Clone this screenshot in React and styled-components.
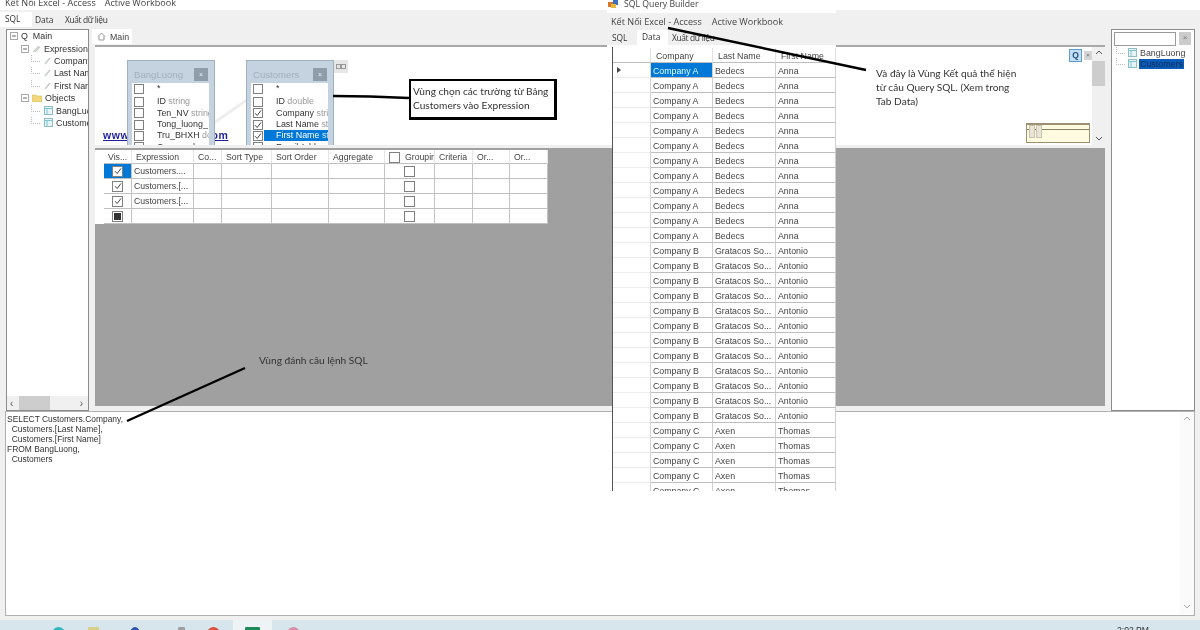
import React from "react";
import styled, { createGlobalStyle } from "styled-components";

const Global = createGlobalStyle`
  html, body { margin: 0; padding: 0; background: #fff; }
  * { box-sizing: border-box; }
`;
const ui = `"Liberation Sans", Arial, sans-serif`;
const menuFont = `"Open Sans", "Noto Sans", sans-serif`;
const noteFont = `Lato, "Open Sans", sans-serif`;

const Page = styled.div`
  position: relative; width: 1200px; height: 630px; overflow: hidden;
  display: flex; flex-direction: column; background: #f0f0f0;
  font-family: ${ui}; font-size: 8.8px; color: #333; filter: blur(.3px);
`;
const MenuBar = styled.div`
  height: 10px; flex: none; overflow: hidden; background: #fff; display: flex; gap: 9px;
  padding-left: 5px; font: 9.1px/10px ${menuFont}; color: #444;
`;
const MenuItem = styled.span`margin-top: -2px;`;
const TabBar = styled.div`
  height: 17px; flex: none; display: flex; align-items: flex-end; background: #f0f0f0;
  font: 8.4px/14px ${menuFont}; color: #333;
`;
const Tab = styled.div`
  height: ${p => (p.$on ? 15 : 14)}px; width: ${p => (p.$w ? `${p.$w}px` : "auto")}; padding-left: ${p => p.$pad || 5}px;
  letter-spacing: ${p => p.$tight ? "-.35px" : "0"}; background: ${p => (p.$on ? "#fff" : "transparent")};
`;
const Workspace = styled.div`
  height: 384px; flex: none; display: flex; padding: 2px 5px 0 6px; gap: 6px;
`;
const TreePanel = styled.div`
  width: 83px; flex: none; background: #fff; border: 1px solid #8c8c8c; display: flex; flex-direction: column; overflow: hidden;
`;
const TreeBody = styled.div`flex: 1; min-height: 0; overflow: hidden;`;
const TreeRow = styled.div`
  height: 12.4px; display: flex; align-items: center; white-space: nowrap; padding-left: ${p => p.$indent}px; gap: 3px; color: #333; font-size: 8.9px;
`;
const HScroll = styled.div`
  height: 14px; flex: none; display: flex; align-items: center; background: #f0f0f0; padding: 0 5px 0 3px; color: #555; font-size: 10px;
`;
const Thumb = styled.div`width: 31px; height: 14px; margin: 0 auto 0 6px; background: #cdcdcd;`;
const Center = styled.div`width: 1010px; flex: none; display: flex; flex-direction: column;`;
const CenterTabs = styled.div`height: 15px; flex: none; display: flex;`;
const MainTab = styled.div`
  width: 40px; margin-left: -3px; background: #fff; display: flex; align-items: center; gap: 4px; padding-left: 5px; color: #444; font-size: 8.8px;
`;
const EditorFrame = styled.div`
  flex: 1; background: #f0f0f0; padding-top: 2px; display: flex; flex-direction: column; min-height: 0; overflow: hidden; margin-bottom: 5px;
`;
const Diagram = styled.div`
  position: relative; height: 100px; flex: none; overflow: hidden; background: #fff; border-top: 2px solid #a8a8a8; margin-top: -1px;
`;
const Watermark = styled.svg`position: absolute; left: 110px; top: 20px;`;
const SiteLink = styled.a`
  position: absolute; left: 8px; top: 82px; color: #1f1f9e; font: bold 10.5px ${ui}; text-decoration: underline; letter-spacing: .6px;
`;
const Card = styled.div`
  position: absolute; left: ${p => p.$x}px; top: 13px; width: 88px; height: 110px; background: #c5d3e1; border: 1px solid #9fb0c2; padding: 0 5px 0 4px;
`;
const CardHead = styled.div`
  height: 22px; display: flex; align-items: flex-start; justify-content: space-between; padding: 7px 1px 0 2px; color: #a2afbb; font-size: 9.6px; line-height: 13px;
`;
const CloseBtn = styled.span`
  width: 14px; height: 13px; background: #8f9dab; color: #eef; display: flex; align-items: center; justify-content: center; font-size: 7px;
`;
const CardBody = styled.div`background: #fff; height: 90px; overflow: hidden;`;
const FieldRow = styled.div`
  height: 11.3px; display: flex; align-items: center; white-space: nowrap; overflow: hidden; padding-left: 2px; color: #333; font-size: 8.9px;
  &:first-child { margin-bottom: 2px; }
`;
const Box = styled.span`
  flex: none; width: ${p => p.$s || 10}px; height: ${p => p.$s || 10}px; border: 1px solid #808080; background: #fff; display: inline-flex; align-items: center; justify-content: center;
`;
const FieldName = styled.span`
  flex: 1; height: 11px; line-height: 11px; padding-left: 13px; margin-left: 1px; text-indent: -1px;
  background: ${p => (p.$on ? "#0078d7" : "transparent")}; color: ${p => (p.$on ? "#fff" : "#333")};
`;
const Muted = styled.span`color: ${p => (p.$on ? "#cfe4f7" : "#999")};`;
const MiniBtn = styled.span`
  position: absolute; left: 239px; top: 13px; width: 14px; height: 13px; background: #e6e6e6; display: flex; align-items: center; justify-content: center;
`;
const QBtn = styled.span`
  position: absolute; right: 23px; top: 2px; width: 13px; height: 13px; background: #c5dff2; border: 1px solid #5d9ccc; color: #1f4f7f; font: bold 8.5px/11px ${ui}; text-align: center;
`;
const SmallX = styled.span`
  position: absolute; right: 13px; top: 4px; width: 8px; height: 9px; background: #d4d4d4; color: #666; font-size: 6px; line-height: 8px; text-align: center;
`;
const VScroll = styled.div`
  position: absolute; right: 0; top: 0; bottom: 0; width: 13px; background: #f0f0f0; display: flex; flex-direction: column; align-items: center; justify-content: space-between; padding: 3px 0 4px;
`;
const VThumb = styled.div`position: absolute; top: 14px; left: 0; width: 13px; height: 25px; background: #cdcdcd;`;
const MiniMap = styled.div`
  position: absolute; left: 931px; top: 76px; width: 64px; height: 20px; background: #fffbe0; border: 1px solid #9c8f73; border-top-width: 2px;
`;
const MiniHead = styled.div`height: 5px; border-bottom: 1px solid #8a7f66; display: flex; gap: 1px; padding-left: 2px;`;
const MiniCell = styled.span`width: 6px; height: 13px; background: #e9e5d6; border: 1px solid #c9c2b0;`;
const GrayArea = styled.div`flex: 1; background: #a0a0a0; margin-top: 3px; padding-top: 2px; min-height: 0;`;
const QueryGrid = styled.div`
  width: 453px; background: #fff; display: grid;
  grid-template-columns: 9px 28px 62px 28px 50px 57px 56px 50px 38px 37px 38px;
  grid-template-rows: 14px repeat(4, 15px);
`;
const QCell = styled.div`
  display: flex; align-items: center; justify-content: ${p => (p.$mid ? "center" : "flex-start")}; gap: 5px;
  padding-left: ${p => (p.$mid ? 0 : p.$head ? 4 : 2)}px; padding-top: ${p => (p.$head ? 1 : 0)}px;
  border-right: ${p => (p.$plain ? 0 : `1px solid ${p.$head ? "#e6e6e6" : "#c4c4c4"}`)}; border-bottom: ${p => (p.$plain ? 0 : "1px solid #c0c0c0")};
  background: ${p => (p.$on ? "#0078d7" : "#fff")}; overflow: hidden; white-space: nowrap; color: #444; font-size: 8.7px;
`;
const ObjectPanel = styled.div`
  width: 84px; flex: none; background: #fff; border: 1px solid #8c8c8c; padding: 2px;
`;
const SearchRow = styled.div`display: flex; gap: 3px; height: 15px; margin-bottom: 0;`;
const SearchBox = styled.div`width: 62px; height: 14px; border: 1px solid #9a9a9a; background: #fff;`;
const SearchX = styled.div`width: 12px; height: 13px; background: #ccc; color: #777; text-align: center; font-size: 8px; line-height: 12px;`;
const ObjRow = styled.div`height: 11px; display: flex; align-items: center; gap: 2px; padding-left: 2px; color: #444; font-size: 8.9px;`;
const ObjName = styled.span`
  height: 10px; line-height: 10px; padding: 0 1px; background: ${p => (p.$on ? "#0a5cb8" : "transparent")}; color: ${p => (p.$on ? "#0b2a55" : "#444")};
`;
const SqlPane = styled.div`
  height: 205px; flex: none; margin: 0 5px; background: #fff; border: 1px solid #b0b0b0; display: flex; justify-content: space-between;
`;
const SqlText = styled.pre`margin: 0; padding: 2px 0 0 1px; font: 8.45px/10px ${ui}; color: #333;`;
const SqlScroll = styled.div`
  width: 14px; background: #fafafa; display: flex; flex-direction: column; justify-content: space-between; align-items: center; padding: 4px 0 6px;
`;
const Taskbar = styled.div`
  height: 10px; flex: none; margin-top: 4px; background: #d7e6ec; display: flex; align-items: flex-start; overflow: hidden;
`;
const Pin = styled.span`
  flex: none; margin-left: ${p => p.$ml}px; margin-top: 7px; width: ${p => p.$w || 13}px; height: 13px; border-radius: ${p => (p.$sq ? "1px" : "50%")}; background: ${p => p.$c};
`;
const ActiveTile = styled.div`
  flex: none; margin-left: ${p => p.$ml}px; width: 39px; height: 10px; background: #eef3f5; display: flex; justify-content: center;
`;
const Clock = styled.span`margin-left: auto; margin-right: 51px; margin-top: 5px; font-size: 8.6px; line-height: 10px; color: #333;`;

const ResultWindow = styled.div`
  position: absolute; left: 607px; top: 0; width: 229px; height: 491px; display: flex; flex-direction: column; overflow: hidden;
`;
const ResultTitle = styled.div`
  height: 13px; flex: none; background: #fff; display: flex; align-items: flex-start; gap: 5px; padding-left: 1px; font: 8.7px/9px ${menuFont}; color: #444; overflow: hidden;
`;
const ResultMenu = styled.div`
  height: 16px; flex: none; background: #f0f0f0; display: flex; gap: 10px; padding-left: 4px; font: 9.1px/17px ${menuFont}; color: #444;
`;
const ResultTabs = styled.div`
  height: 16px; flex: none; background: #f0f0f0; display: flex; align-items: flex-end; font: 8.4px/14px ${menuFont}; color: #333;
`;
const Rule = styled.div`height: 2px; flex: none; background: #fff;`;
const DataGrid = styled.div`
  flex: 1; margin-left: 5px; background: #fff; border-left: 1px solid #555; display: grid; grid-template-columns: 38px 62px 63px 60px; grid-auto-rows: 15px; overflow: hidden; align-content: start;
  padding-top: 1px;
`;
const Head = styled.div`height: 15px; line-height: 16px; padding-left: ${p => p.$pad ?? 5}px; border-right: 1px solid #e2e2e2; border-bottom: 1px solid #bdbdbd; color: #444; background: #fff;`;
const RowHead = styled.div`height: 15px; border-bottom: 1px solid #ececec; border-right: 1px solid #d4d4d4; display: flex; align-items: center; padding-left: 4px;`;
const DCell = styled.div`
  height: 15px; line-height: 17px; padding-left: 2px; border-right: 1px solid #cfcfcf; border-bottom: 1px solid #bdbdbd; white-space: nowrap; overflow: hidden;
  background: ${p => (p.$on ? "#0078d7" : "#fff")}; color: ${p => (p.$on ? "#dff" : "#444")};
`;
const Note = styled.div`
  position: absolute; left: ${p => p.$x}px; top: ${p => p.$y}px; width: ${p => p.$w}px; font: 10.15px/14px ${noteFont}; color: #333;
`;
const NoteBox = styled(Note)`
  border: 2px solid #000; border-width: 2px 3px 3px 2px; height: 41px; padding: 3px 2px; background: #fff;
`;
const Lines = styled.svg`position: absolute; left: 0; top: 0; pointer-events: none;`;

const Tick = () => (
  <svg width="8" height="8" viewBox="0 0 8 8"><path d="M1 4.2 3.2 6.5 7 1.4" fill="none" stroke="#444" strokeWidth="1" /></svg>
);
const Expander = () => (
  <svg width="8" height="8" viewBox="0 0 8 8" style={{ flex: "none" }}>
    <rect x=".5" y=".5" width="7" height="7" fill="#fff" stroke="#aaa" />
    <path d="M2 4h4" stroke="#666" />
  </svg>
);
const Branch = () => (
  <svg width="10" height="12" viewBox="0 0 10 12" style={{ flex: "none" }}>
    <path d="M.5 0v6.5H10" fill="none" stroke="#bbb" strokeDasharray="1 1" />
  </svg>
);
const Pen = () => (
  <svg width="7" height="8" viewBox="0 0 7 8" style={{ flex: "none" }}>
    <path d="M1 7 6 1" stroke="#c4cdc9" strokeWidth="1.5" />
  </svg>
);
const PenGreen = () => (
  <svg width="9" height="8" viewBox="0 0 9 8" style={{ flex: "none" }}>
    <path d="M1 7 7 1M3 7 8 2" stroke="#c6d3c4" strokeWidth="1.2" />
  </svg>
);
const Folder = () => (
  <svg width="10" height="8" viewBox="0 0 10 8" style={{ flex: "none" }}>
    <path d="M0 1h4l1 1h5v6H0z" fill="#f0d77c" stroke="#cfb452" strokeWidth=".5" />
  </svg>
);
const TableIcon = () => (
  <svg width="9" height="9" viewBox="0 0 9 9" style={{ flex: "none" }}>
    <rect x=".5" y=".5" width="8" height="8" fill="#e8f3f5" stroke="#8fbcca" />
    <path d="M0 2.5h9M3 2.5V9" stroke="#7cc6d0" />
  </svg>
);
const House = () => (
  <svg width="9" height="9" viewBox="0 0 9 9" style={{ flex: "none" }}>
    <path d="M1 4.5 4.5 1 8 4.5M2 4v4h5V4" fill="none" stroke="#999" />
  </svg>
);
const Chevron = ({ up, c = "#555" }) => (
  <svg width="8" height="5" viewBox="0 0 8 5"><path d={up ? "M1 4 4 1l3 3" : "M1 1l3 3 3-3"} fill="none" stroke={c} strokeWidth="1" /></svg>
);
const AppIcon = () => (
  <svg width="11" height="9" viewBox="0 0 11 9" style={{ flex: "none" }}>
    <rect x="0" y="2" width="5" height="5" fill="#d9772b" />
    <rect x="5" y="0" width="5" height="5" fill="#3d6fc4" />
    <rect x="3" y="4" width="5" height="4" fill="#e9b93a" />
  </svg>
);
const Tables = () => (
  <svg width="10" height="5" viewBox="0 0 10 5">
    <rect x=".5" y=".5" width="4" height="4" fill="none" stroke="#999" />
    <rect x="5.5" y=".5" width="4" height="4" fill="none" stroke="#999" />
  </svg>
);

const Field = ({ on, name, type, check }) => (
  <FieldRow>
    <Box>{check && <Tick />}</Box>
    <FieldName $on={on}>{name} <Muted $on={on}>{type}</Muted></FieldName>
  </FieldRow>
);

const bang = [["*", ""], ["ID", "string"], ["Ten_NV", "string"], ["Tong_luong_", "do"], ["Tru_BHXH", "double"], ["Conga_nh", ""]];
const cust = [["*", ""], ["ID", "double"], ["Company", "string", 1], ["Last Name", "string", 1], ["First Name", "string", 1, 1], ["Email Addr", ""]];

const headers = ["", "Vis...", "Expression", "Co...", "Sort Type", "Sort Order", "Aggregate", "Grouping", "Criteria", "Or...", "Or..."];
const qRows = ["Customers....", "Customers.[...", "Customers.[...", ""];

const groups = [["Company A", "Bedecs", "Anna", 12], ["Company B", "Gratacos So...", "Antonio", 12], ["Company C", "Axen", "Thomas", 5]];
const rows = groups.flatMap(([c, l, f, n]) => Array.from({ length: n }, () => [c, l, f]));

export default function App() {
  return (
    <Page>
      <Global />
      <MenuBar><MenuItem>Kết Nối Excel - Access</MenuItem><MenuItem>Active Workbook</MenuItem></MenuBar>
      <TabBar><Tab $on $w={32}>SQL</Tab><Tab $w={30} $pad={3}>Data</Tab><Tab $pad={3} $tight>Xuất dữ liệu</Tab></TabBar>
      <Workspace>
        <TreePanel>
          <TreeBody>
            <TreeRow $indent={3}><Expander /><span>Q&nbsp; Main</span></TreeRow>
            <TreeRow $indent={14}><Expander /><PenGreen /><span>Expression</span></TreeRow>
            <TreeRow $indent={24}><Branch /><Pen /><span>Company</span></TreeRow>
            <TreeRow $indent={24}><Branch /><Pen /><span>Last Name</span></TreeRow>
            <TreeRow $indent={24}><Branch /><Pen /><span>First Name</span></TreeRow>
            <TreeRow $indent={14}><Expander /><Folder /><span>Objects</span></TreeRow>
            <TreeRow $indent={24}><Branch /><TableIcon /><span>BangLuong</span></TreeRow>
            <TreeRow $indent={24}><Branch /><TableIcon /><span>Customers</span></TreeRow>
          </TreeBody>
          <HScroll><span>‹</span><Thumb /><span>›</span></HScroll>
        </TreePanel>
        <Center>
          <CenterTabs><MainTab><House />Main</MainTab></CenterTabs>
          <EditorFrame>
            <Diagram>
              <SiteLink>www.activedbsoft.com</SiteLink>
              <Watermark width="60" height="70" viewBox="0 0 60 70">
                <path d="M0 62 52 26" stroke="#eeeeee" strokeWidth="3" fill="none" />
              </Watermark>
              <Card $x={32}>
                <CardHead>BangLuong<CloseBtn>×</CloseBtn></CardHead>
                <CardBody>{bang.map(([n, t]) => <Field key={n} name={n} type={t} />)}</CardBody>
              </Card>
              <Card $x={151}>
                <CardHead>Customers<CloseBtn>×</CloseBtn></CardHead>
                <CardBody>{cust.map(([n, t, c, o]) => <Field key={n} name={n} type={t} check={c} on={o} />)}</CardBody>
              </Card>
              <MiniBtn><Tables /></MiniBtn>
              <QBtn>Q</QBtn>
              <SmallX>×</SmallX>
              <VScroll><VThumb /><Chevron up /><Chevron /></VScroll>
              <MiniMap><MiniHead><MiniCell /><MiniCell /></MiniHead></MiniMap>
            </Diagram>
            <GrayArea>
              <QueryGrid>
                {headers.map((h, i) => (
                  <QCell key={i} $head $plain={i === 0}>
                    {i === 7 && <Box $s={11} />}
                    {h}
                  </QCell>
                ))}
                {qRows.map((e, r) => (
                  <React.Fragment key={r}>
                    <QCell $plain />
                    <QCell $mid $on={r === 0}>
                      <Box $s={11}>{r < 3 ? <Tick /> : <svg width="7" height="7"><rect width="7" height="7" fill="#333" /></svg>}</Box>
                    </QCell>
                    <QCell>{e}</QCell>
                    <QCell /><QCell /><QCell /><QCell />
                    <QCell $mid><Box $s={11} /></QCell>
                    <QCell /><QCell /><QCell />
                  </React.Fragment>
                ))}
              </QueryGrid>
            </GrayArea>
          </EditorFrame>
        </Center>
        <ObjectPanel>
          <SearchRow><SearchBox /><SearchX>×</SearchX></SearchRow>
          <ObjRow><Branch /><TableIcon /><ObjName>BangLuong</ObjName></ObjRow>
          <ObjRow><Branch /><TableIcon /><ObjName $on>Customers</ObjName></ObjRow>
        </ObjectPanel>
      </Workspace>
      <SqlPane>
        <SqlText>{"SELECT Customers.Company,\n  Customers.[Last Name],\n  Customers.[First Name]\nFROM BangLuong,\n  Customers"}</SqlText>
        <SqlScroll><Chevron up c="#aaa" /><Chevron c="#aaa" /></SqlScroll>
      </SqlPane>
      <Taskbar>
        <Pin $ml={52} $c="#2fb6c0" />
        <Pin $ml={23} $w={11} $c="#d9cf8a" $sq />
        <Pin $ml={31} $w={10} $c="#2a57b0" />
        <Pin $ml={38} $w={7} $c="#a0a0a0" $sq />
        <Pin $ml={22} $c="#d9503f" />
        <ActiveTile $ml={13}><Pin $ml={0} $w={15} $c="#1f8a5a" $sq /></ActiveTile>
        <Pin $ml={15} $c="#d88fa8" />
        <Clock>2:02 PM</Clock>
      </Taskbar>

      <ResultWindow>
        <ResultTitle><AppIcon /><span>SQL Query Builder</span></ResultTitle>
        <ResultMenu><span>Kết Nối Excel - Access</span><span>Active Workbook</span></ResultMenu>
        <ResultTabs><Tab $w={30} $pad={5}>SQL</Tab><Tab $on $w={31} $pad={5}>Data</Tab><Tab $pad={4} $tight>Xuất dữ liệu</Tab></ResultTabs>
        <Rule />
        <DataGrid>
          <Head $pad={0} />
          <Head>Company</Head><Head>Last Name</Head><Head>First Name</Head>
          {rows.map((r, i) => (
            <React.Fragment key={i}>
              <RowHead>{i === 0 && <svg width="4" height="6"><path d="M0 0l4 3-4 3z" fill="#444" /></svg>}</RowHead>
              <DCell $on={i === 0}>{r[0]}</DCell><DCell>{r[1]}</DCell><DCell>{r[2]}</DCell>
            </React.Fragment>
          ))}
        </DataGrid>
      </ResultWindow>

      <NoteBox $x={409} $y={79} $w={148}>Vùng chọn các trường từ Bảng<br />Customers vào Expression</NoteBox>
      <Note $x={259} $y={353} $w={140}>Vùng đánh câu lệnh SQL</Note>
      <Note $x={876} $y={66} $w={170}>Và đây là Vùng Kết quả thể hiện<br />từ câu Query SQL. (Xem trong<br />Tab Data)</Note>
      <Lines width="1200" height="630" viewBox="0 0 1200 630">
        <path d="M333 96 370 96.5 409 98" stroke="#000" strokeWidth="2.4" fill="none" />
        <path d="M127 421 245 368" stroke="#000" strokeWidth="2.4" fill="none" />
        <path d="M668 28 866 70" stroke="#000" strokeWidth="2.4" fill="none" />
      </Lines>
    </Page>
  );
}
